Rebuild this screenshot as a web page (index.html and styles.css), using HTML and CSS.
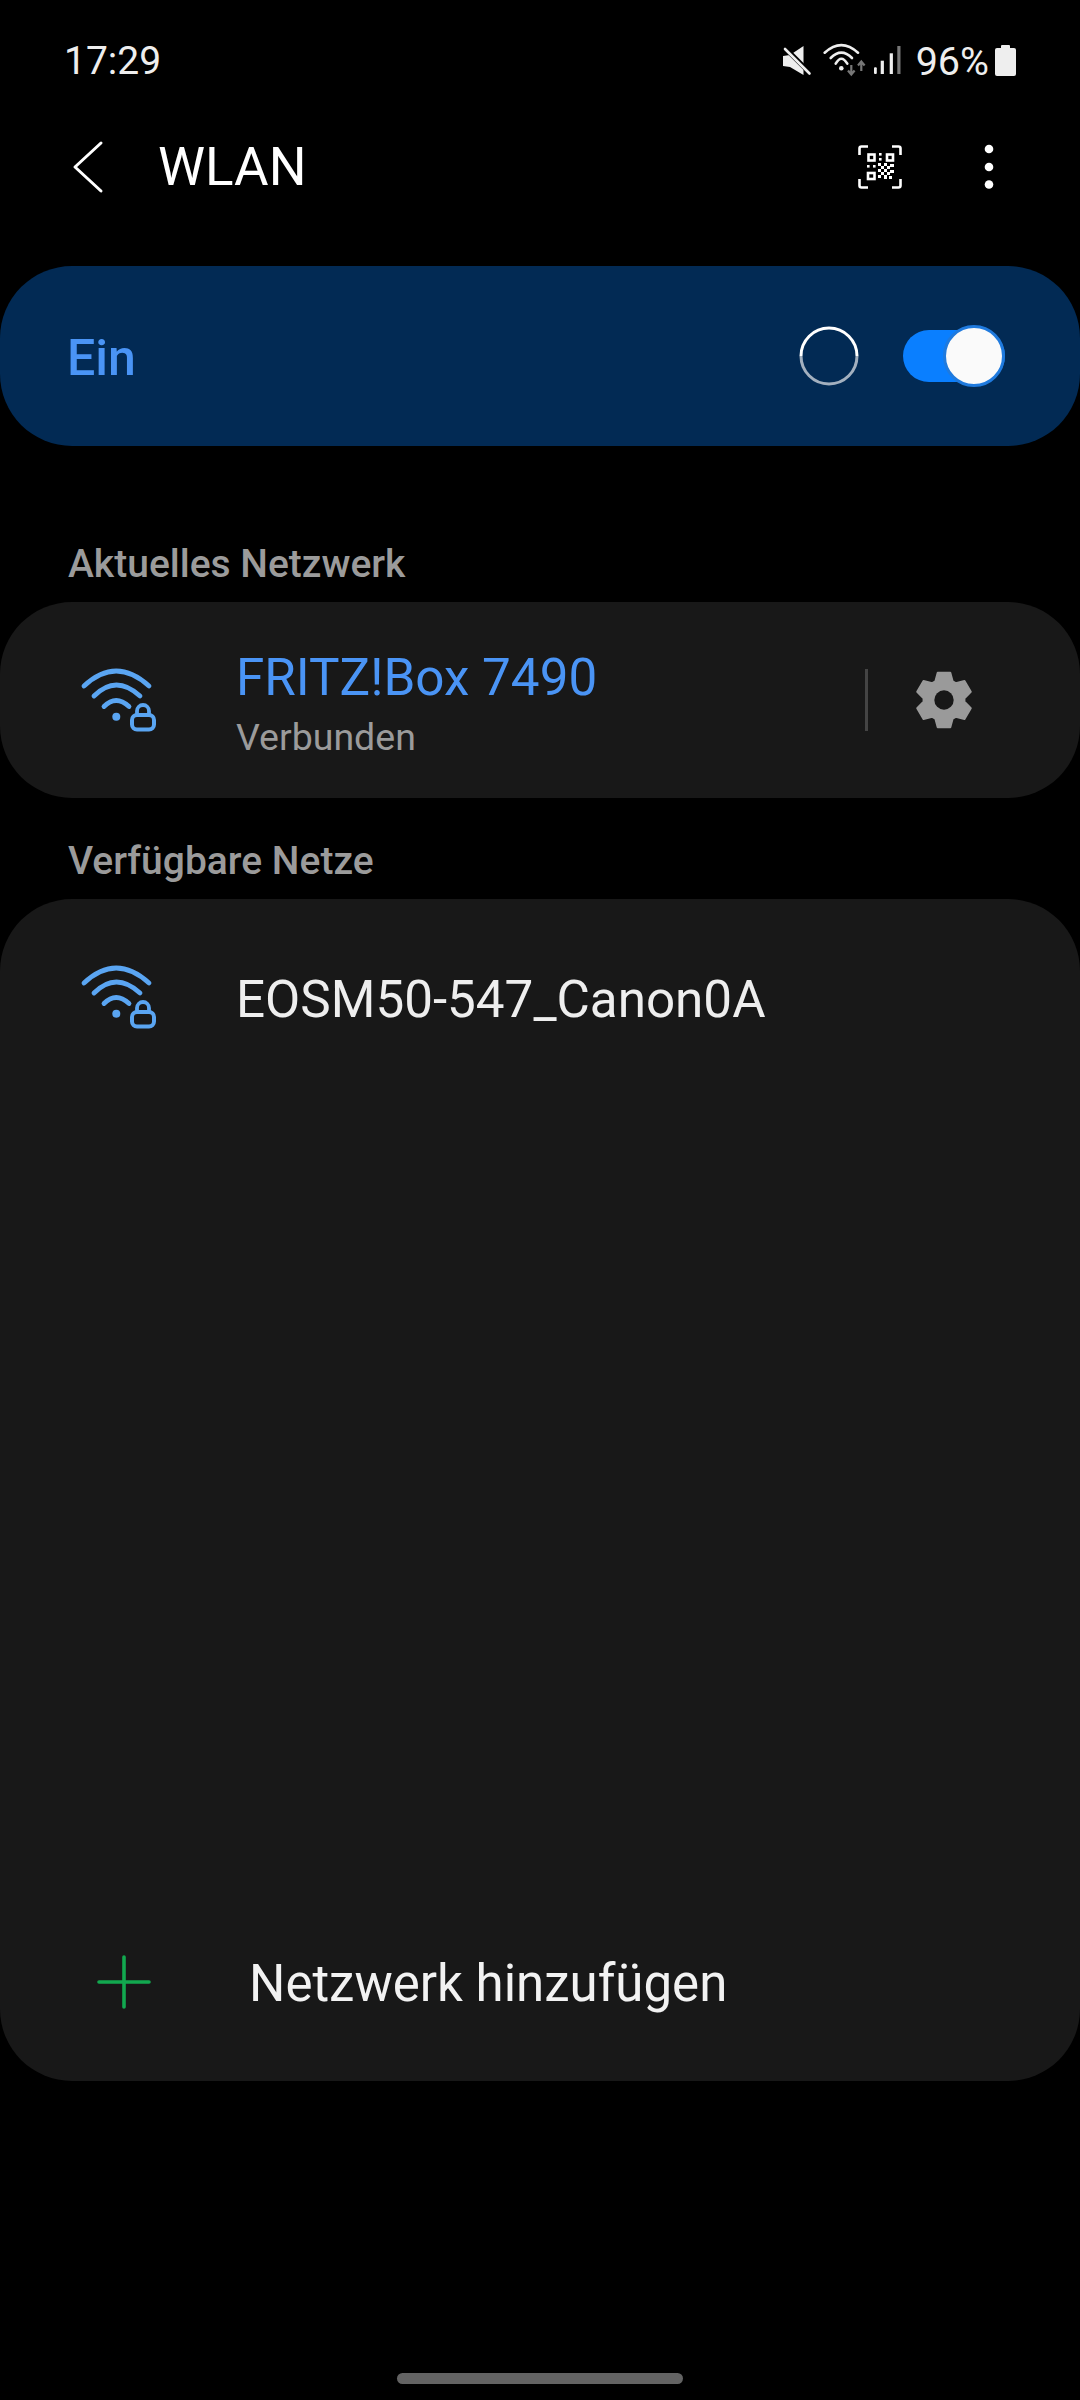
FILE: index.html
```html
<!DOCTYPE html>
<html lang="de">
<head>
    <meta charset="UTF-8">
    <meta name="viewport" content="width=device-width, initial-scale=1.0">
    <title>WLAN</title>
    <link rel="stylesheet" href="styles.css">
</head>
<body>
<div class="page">

    <div class="status">
        <span class="time">17:29</span>
        <div class="status-right">
            <svg class="ic-mute" width="30" height="31" viewBox="0 0 30 31">
                <polygon points="1,11 8,10 21.5,1 21.5,30 8,22 1,21" fill="#eee"/>
                <line x1="0" y1="0" x2="26" y2="26" stroke="#000" stroke-width="5"/>
                <line x1="3" y1="4" x2="27.5" y2="28.5" stroke="#eee" stroke-width="2.6" stroke-linecap="round"/>
            </svg>
            <svg class="ic-wifi" width="44" height="34" viewBox="0 0 44 34" fill="none" stroke="#eee" stroke-width="2.6" stroke-linecap="round">
                <path d="M1.7 9.7 Q18.3 -5.5 35 9.7"/>
                <path d="M7.7 15 Q18.3 4.4 29 15"/>
                <path d="M12.7 20.7 Q18.3 10.7 24.3 20.7"/>
                <circle cx="18.3" cy="25.3" r="2.3" fill="#eee" stroke="none"/>
                <g stroke="#777" stroke-width="2.2" stroke-linecap="butt">
                    <path d="M28.3 22 V31 M25 27.5 L28.3 31.5 L31.6 27.5"/>
                    <path d="M38.3 28 V19 M35 22.5 L38.3 18.5 L41.6 22.5"/>
                </g>
            </svg>
            <svg class="ic-signal" width="28" height="30" viewBox="0 0 28 30" fill="#eee">
                <rect x="1" y="22.3" width="2.8" height="6.7" rx="1"/>
                <rect x="7.7" y="15.7" width="3.2" height="13.3"/>
                <rect x="16.7" y="8.3" width="3.2" height="20.7"/>
                <rect x="24.3" y="1" width="3.2" height="28" fill="#777"/>
            </svg>
            <span class="battery-pct">96%</span>
            <svg class="ic-battery" width="21" height="31" viewBox="0 0 21 31" fill="#eee">
                <rect x="6" y="0" width="9" height="5" rx="1"/>
                <rect x="0" y="3" width="21" height="28" rx="2"/>
            </svg>
        </div>
    </div>

    <div class="appbar">
        <svg class="ic-back" width="34" height="54" viewBox="0 0 34 54" fill="none" stroke="#fff" stroke-width="3" stroke-linecap="round" stroke-linejoin="round">
            <path d="M30 3 L4 27 L30 51"/>
        </svg>
        <h1 class="title">WLAN</h1>
        <svg class="ic-qr" width="44" height="44" viewBox="0 0 44 44" fill="none" stroke="#fff" stroke-width="2.6">
            <path d="M10 1.5 H3.5 Q1.5 1.5 1.5 3.5 V10"/>
            <path d="M34 1.5 H40.5 Q42.5 1.5 42.5 3.5 V10"/>
            <path d="M10 42.5 H3.5 Q1.5 42.5 1.5 40.5 V34"/>
            <path d="M34 42.5 H40.5 Q42.5 42.5 42.5 40.5 V34"/>
            <rect x="10.5" y="9.5" width="6" height="6"/>
            <rect x="29" y="9.5" width="6" height="6"/>
            <rect x="10" y="28" width="6.5" height="6"/>
            <g fill="#fff" stroke="none">
                <rect x="21" y="8" width="2.6" height="2.6"/>
                <rect x="21" y="13" width="2.6" height="2.6"/>
                <rect x="9" y="20" width="2.6" height="2.6"/>
                <rect x="15" y="20" width="2.6" height="2.6"/>
                <rect x="20" y="18" width="3" height="3"/>
                <rect x="26" y="18" width="3" height="3"/>
                <rect x="32" y="19" width="4" height="3"/>
                <rect x="23" y="21" width="3" height="3"/>
                <rect x="29" y="21" width="3" height="3"/>
                <rect x="20" y="24" width="3" height="3"/>
                <rect x="26" y="24" width="3" height="3"/>
                <rect x="32" y="25" width="4" height="3"/>
                <rect x="23" y="27" width="3" height="3"/>
                <rect x="29" y="27" width="3" height="3"/>
                <rect x="20" y="30" width="3" height="3"/>
                <rect x="26" y="30" width="3" height="4"/>
                <rect x="31" y="31" width="3" height="3"/>
            </g>
        </svg>
        <svg class="ic-more" width="10" height="46" viewBox="0 0 10 46" fill="#fff">
            <circle cx="5" cy="5" r="4.3"/>
            <circle cx="5" cy="23" r="4.3"/>
            <circle cx="5" cy="40.5" r="4.3"/>
        </svg>
    </div>

    <div class="switch-card">
        <span class="switch-label">Ein</span>
        <svg class="ic-radio" width="60" height="60" viewBox="0 0 60 60" fill="none" stroke-width="3">
            <path d="M2 30 A28 28 0 0 1 58 30" stroke="#fff"/>
            <path d="M2 30 A28 28 0 0 0 58 30" stroke="#a3b0bf"/>
        </svg>
        <div class="toggle">
            <div class="toggle-thumb"></div>
        </div>
    </div>

    <div class="section-label first">Aktuelles Netzwerk</div>
    <div class="card current">
        <svg class="ic-net" width="130" height="120" viewBox="0 0 130 120" fill="none" stroke="#5aa5f2" stroke-width="4.8" stroke-linecap="round">
            <path d="M34 46 Q66 16 99 46"/>
            <path d="M44 56 Q66 34 90 56"/>
            <path d="M54 66.5 Q66 54.5 79 66.5"/>
            <circle cx="66.3" cy="76.7" r="4" fill="#5aa5f2" stroke="none"/>
            <rect x="82" y="75" width="22" height="14.5" rx="5" stroke-width="4"/>
            <path d="M87 74 V71 A6 6 0 0 1 99 71 V74" stroke-width="3.8"/>
        </svg>
        <div class="net-text">
            <div class="net-name active">FRITZ!Box 7490</div>
            <div class="net-sub">Verbunden</div>
        </div>
        <div class="divider"></div>
        <svg class="ic-gear" width="60" height="60" viewBox="-30 -30 60 60">
            <polygon fill="#9a9a9a" stroke="#9a9a9a" stroke-width="2" stroke-linejoin="round"
                points="-6.3,-27.3 6.3,-27.3 8.66,-18.58 11.76,-16.79 20.48,-19.1 26.78,-8.19 20.42,-1.79 20.42,1.79 26.78,8.19 20.48,19.1 11.76,16.79 8.66,18.58 6.3,27.3 -6.3,27.3 -8.66,18.58 -11.76,16.79 -20.48,19.1 -26.78,8.19 -20.42,1.79 -20.42,-1.79 -26.78,-8.19 -20.48,-19.1 -11.76,-16.79 -8.66,-18.58"/>
            <circle r="9.7" fill="#181818"/>
        </svg>
    </div>

    <div class="section-label">Verfügbare Netze</div>
    <div class="card available">
        <div class="net-row">
            <svg class="ic-net" width="130" height="120" viewBox="0 0 130 120" fill="none" stroke="#5aa5f2" stroke-width="4.8" stroke-linecap="round">
                <path d="M34 46 Q66 16 99 46"/>
                <path d="M44 56 Q66 34 90 56"/>
                <path d="M54 66.5 Q66 54.5 79 66.5"/>
                <circle cx="66.3" cy="76.7" r="4" fill="#5aa5f2" stroke="none"/>
                <rect x="82" y="75" width="22" height="14.5" rx="5" stroke-width="4"/>
                <path d="M87 74 V71 A6 6 0 0 1 99 71 V74" stroke-width="3.8"/>
            </svg>
            <div class="net-name">EOSM50-547_Canon0A</div>
        </div>
        <div class="add-row">
            <svg class="ic-plus" width="56" height="56" viewBox="0 0 56 56" stroke="#12a84f" stroke-width="3.6" stroke-linecap="round">
                <path d="M28 3 V53 M3 28 H53"/>
            </svg>
            <span class="add-label">Netzwerk hinzufügen</span>
        </div>
    </div>

    <div class="home-bar"></div>
</div>
</body>
</html>
```

FILE: styles.css
```css
* {
    box-sizing: border-box;
}

body {
    margin: 0;
    background-color: #000;
    font-family: Roboto, "Noto Sans", sans-serif;
    color: #fff;
}

.page {
    width: 1080px;
    height: 2400px;
    display: flex;
    flex-direction: column;
    overflow: hidden;
}

/* status bar */
.status {
    height: 120px;
    flex: none;
    display: flex;
    align-items: center;
    justify-content: space-between;
    padding: 0 64px 0 64px;
}
.time {
    font-size: 39px;
    color: #eee;
    padding-top: 2px;
}
.status-right {
    display: flex;
    align-items: center;
}
.ic-wifi {
    margin-left: 11px;
}
.ic-signal {
    margin-left: 6px;
}
.battery-pct {
    font-size: 39.5px;
    color: #eee;
    margin-left: 15px;
    padding-top: 2px;
}
.ic-battery {
    margin-left: 6px;
}

/* app bar */
.appbar {
    height: 94px;
    flex: none;
    display: flex;
    align-items: center;
    padding: 0 86px 0 71px;
}
.title {
    margin: 0 0 0 53px;
    font-size: 53px;
    font-weight: 400;
    flex: 1;
}
.ic-more {
    margin-left: 82px;
}

/* on/off card */
.switch-card {
    margin-top: 52px;
    height: 180px;
    flex: none;
    display: flex;
    align-items: center;
    padding: 0 75px 0 67px;
    background-color: #022a54;
    border-radius: 72px;
}
.switch-label {
    flex: 1;
    font-size: 50px;
    font-weight: 500;
    color: #4a94f5;
    padding-top: 3px;
}
.toggle {
    position: relative;
    width: 102px;
    height: 52px;
    margin-left: 44px;
    background-color: #0a7fff;
    border-radius: 26px;
}
.toggle-thumb {
    position: absolute;
    right: 0;
    top: -5px;
    width: 62px;
    height: 62px;
    background-color: #fafafa;
    border: 3px solid #1f7ade;
    border-radius: 50%;
}

/* sections */
.section-label {
    height: 40px;
    flex: none;
    margin: 43px 0 18px 68px;
    font-size: 39px;
    font-weight: 500;
    line-height: 40px;
    color: #9b9b9b;
}
.section-label.first {
    margin-top: 98px;
}

.card {
    flex: none;
    background-color: #181818;
    border-radius: 72px;
}
.current {
    height: 196px;
    display: flex;
    align-items: center;
    padding: 0 40px 0 50px;
}
.available {
    height: 1182px;
    display: flex;
    flex-direction: column;
}

.net-text {
    margin-left: 56px;
    flex: 1;
    padding-top: 8px;
}
.net-name {
    font-size: 51.2px;
    line-height: 60px;
    color: #eee;
}
.net-name.active {
    color: #4a94f5;
}
.net-sub {
    font-size: 37.5px;
    line-height: 46px;
    color: #9b9b9b;
    margin-top: 6px;
}
.divider {
    width: 3px;
    height: 62px;
    background-color: #444;
}
.ic-gear {
    margin: 0 66px 0 46px;
}

.net-row {
    height: 202px;
    display: flex;
    align-items: center;
    padding-left: 50px;
}
.net-row .ic-net {
    margin-bottom: 7px;
}
.net-row .net-name {
    margin-left: 56px;
}

.add-row {
    margin-top: auto;
    height: 198px;
    display: flex;
    align-items: center;
    padding-left: 96px;
}
.add-label {
    margin-left: 97px;
    font-size: 51px;
    color: #f2f2f2;
    padding-top: 3px;
}

.home-bar {
    margin: auto auto 16px;
    width: 286px;
    height: 11px;
    background-color: #636363;
    border-radius: 6px;
}
```
